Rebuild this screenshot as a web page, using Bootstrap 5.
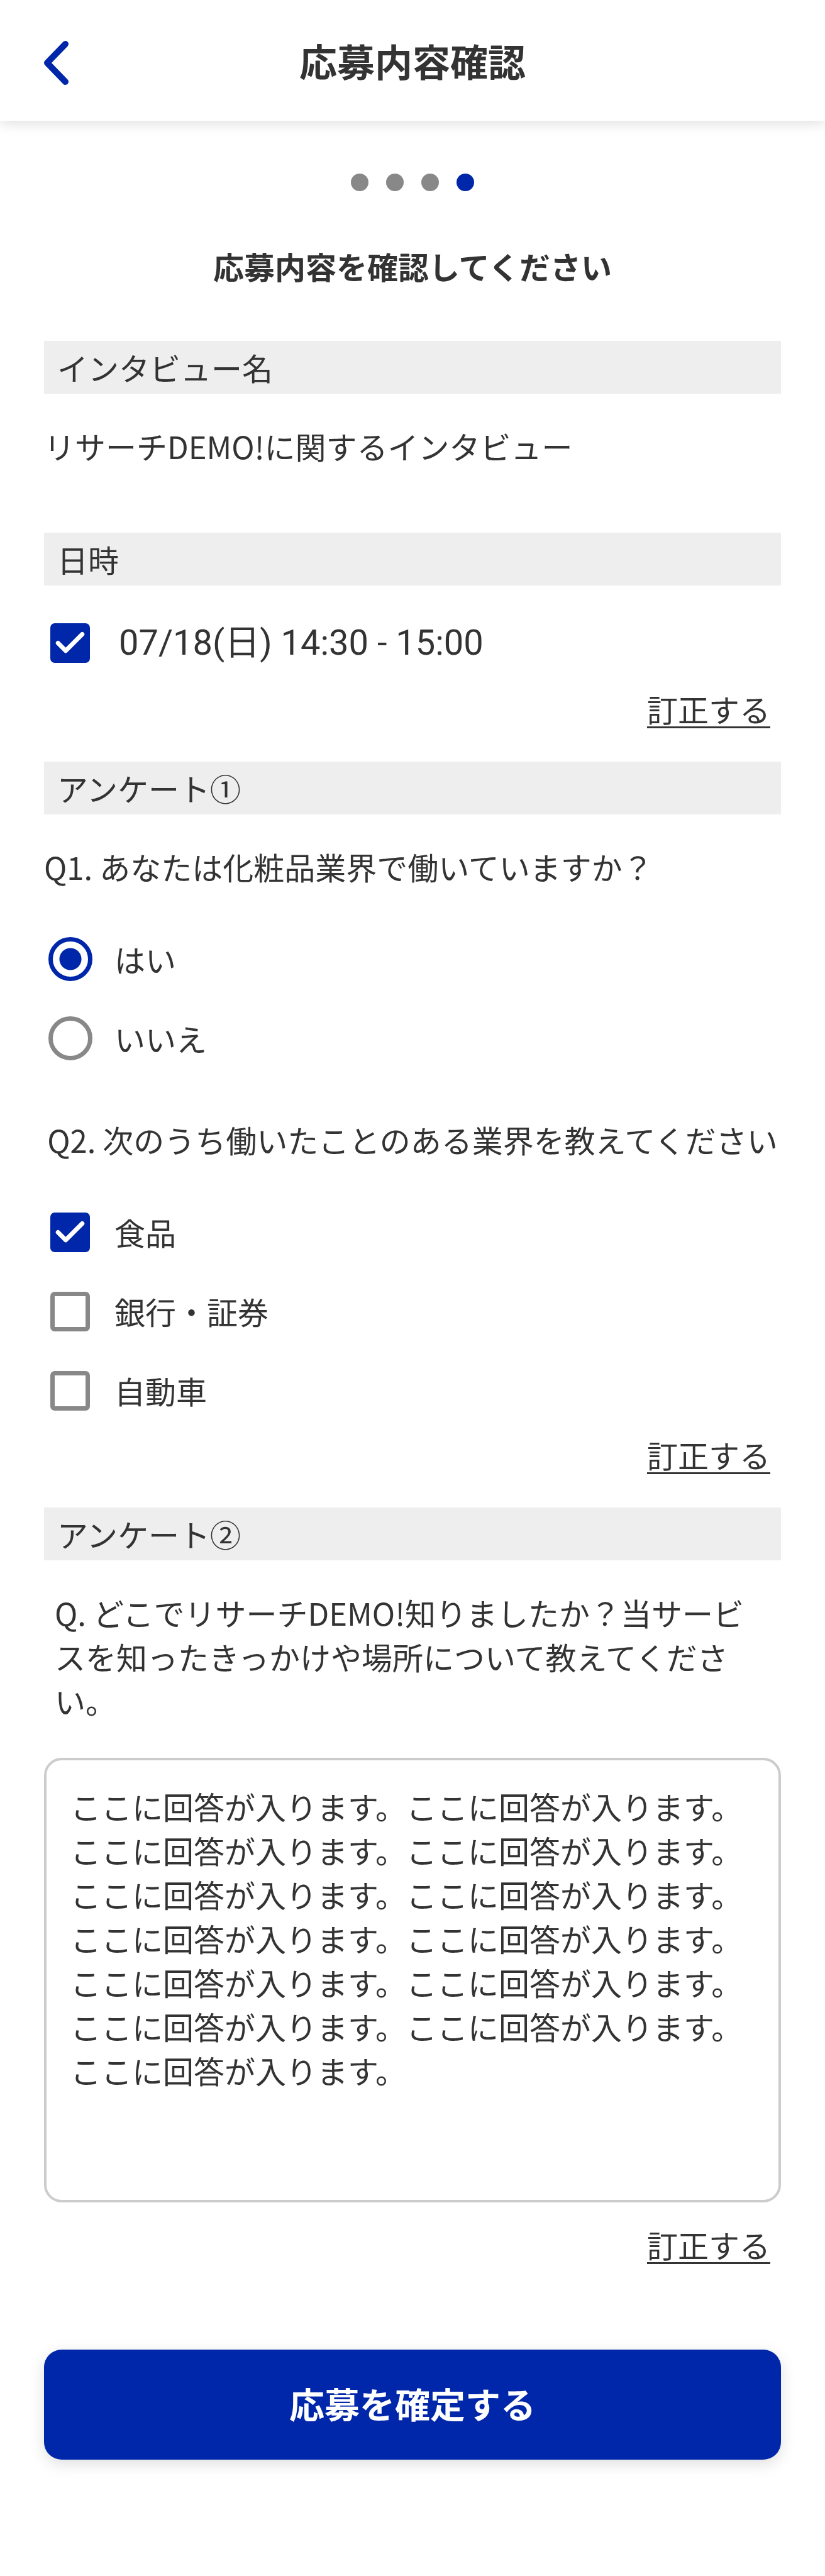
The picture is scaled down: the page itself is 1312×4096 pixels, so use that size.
<!DOCTYPE html>
<html lang="ja">
<head>
<meta charset="utf-8">
<meta name="viewport" content="width=device-width, initial-scale=1">
<title>応募内容確認</title>
<link href="https://cdn.jsdelivr.net/npm/bootstrap@5.3.0/dist/css/bootstrap.min.css" rel="stylesheet">
<style>
  :root { --brand: #0027a9; --ink: #333; --muted: #888; }
  body { font-family: "Noto Sans CJK JP", sans-serif; font-size: 49px; line-height: 70px; color: var(--ink); background: #fff; }
  h1, h2, p, label { margin: 0; }
  .app-header { height: 192px; padding: 0 70px; background: #fff; box-shadow: 0 4px 20px rgba(0,0,0,.13); display: grid; grid-template-columns: 1fr auto 1fr; align-items: center; }
  .app-header h1 { font-size: 60px; line-height: 84px; font-weight: 700; }
  .back-link { display: block; width: 40px; margin-top: 7px; }
  .back-link svg { display: block; }
  .page-main { padding: 84px 70px 184px; }
  .steps { gap: 28px; margin-bottom: 84px; }
  .step-dot { width: 28px; height: 28px; background: var(--muted); }
  .step-dot.active { background: var(--brand); }
  .page-lead { font-size: 49px; line-height: 70px; font-weight: 700; text-align: center; margin-bottom: 84px; }
  .section-bar { font-size: 49px; line-height: 84px; font-weight: 400; background: #eee; padding: 0 21px; margin-bottom: 48px; }
  .interview-name { margin-bottom: 103px; }
  .choices { display: flex; flex-direction: column; gap: 56px; }
  .choices-date { margin: 56px 0 35px; }
  .choices-radio { margin: 77px 0 91px; }
  .choices-check { margin: 77px 0 32px; }
  .choice { display: flex; align-items: center; height: 70px; }
  .choice .form-check-input { flex: none; float: none; margin: 0 35px 0 7px; width: 70px; height: 70px; border: 7px solid var(--muted); background-color: #fff; }
  .choice .form-check-input[type=checkbox] { margin: 0 39px 0 10px; width: 63px; height: 63px; border-radius: 7px; background-size: 63px 63px; background-position: center; background-origin: border-box; }
  .choice .form-check-input:checked { border-color: var(--brand); }
  .choice .form-check-input[type=radio]:checked { background-image: radial-gradient(circle, var(--brand) 17px, #fff 18px); }
  .choice .form-check-input[type=checkbox]:checked { background-color: var(--brand); background-image: url("data:image/svg+xml,%3csvg xmlns='http://www.w3.org/2000/svg' viewBox='0 0 72 72'%3e%3cpath fill='none' stroke='%23fff' stroke-width='8' stroke-linecap='round' stroke-linejoin='round' d='M14 36l14 14l30-30'/%3e%3c/svg%3e"); }
  .date-label { font-family: Roboto, "Noto Sans CJK JP", sans-serif; font-size: 56px; padding-left: 7px; }
  .edit-row { padding-right: 17px; margin-bottom: 49px; }
  .edit-row a { color: var(--ink); text-decoration: underline; text-decoration-thickness: 3px; text-underline-offset: 7px; text-decoration-skip-ink: none; }
  .free-question { padding: 0 17px; margin-bottom: 56px; }
  .answer-box { display: block; height: 707px; font-size: 49px; line-height: 70px; color: var(--ink); border: 4px solid #ccc; border-radius: 28px; padding: 38px; resize: none; margin-bottom: 32px; overflow: hidden; }
  .submit-btn { margin-top: 132px; height: 175px; padding: 0 0 6px; font-size: 56px; line-height: 84px; font-weight: 700; border: 0; border-radius: 28px; box-shadow: 0 7px 24px rgba(0,0,0,.13); --bs-btn-bg: var(--brand); --bs-btn-hover-bg: #001f87; }
</style>
<script src="https://cdn.jsdelivr.net/npm/bootstrap@5.3.0/dist/js/bootstrap.bundle.min.js"></script>
</head>
<body>
<header class="app-header">
  <a class="back-link" href="#" aria-label="戻る">
    <svg width="40" height="72" viewBox="0 0 40 72" fill="none" stroke="#0027a9" stroke-width="10" stroke-linecap="round" stroke-linejoin="round"><path d="M34 6L5 36l29 30"/></svg>
  </a>
  <h1>応募内容確認</h1>
</header>
<main class="page-main">
  <div class="steps d-flex justify-content-center">
    <span class="step-dot rounded-circle"></span>
    <span class="step-dot rounded-circle"></span>
    <span class="step-dot rounded-circle"></span>
    <span class="step-dot rounded-circle active"></span>
  </div>
  <p class="page-lead">応募内容を確認してください</p>

  <section>
    <h2 class="section-bar">インタビュー名</h2>
    <p class="interview-name">リサーチDEMO!に関するインタビュー</p>
  </section>

  <section>
    <h2 class="section-bar">日時</h2>
    <div class="choices choices-date">
      <div class="choice">
        <input class="form-check-input" type="checkbox" id="slot" checked>
        <label class="date-label" for="slot">07/18(日) 14:30 - 15:00</label>
      </div>
    </div>
    <div class="edit-row d-flex justify-content-end"><a href="#">訂正する</a></div>
  </section>

  <section>
    <h2 class="section-bar">アンケート①</h2>
    <p id="q1">Q1. あなたは化粧品業界で働いていますか？</p>
    <div class="choices choices-radio" role="radiogroup" aria-labelledby="q1">
      <div class="choice">
        <input class="form-check-input" type="radio" name="q1" id="q1-yes" checked>
        <label for="q1-yes">はい</label>
      </div>
      <div class="choice">
        <input class="form-check-input" type="radio" name="q1" id="q1-no">
        <label for="q1-no">いいえ</label>
      </div>
    </div>
    <p id="q2" class="text-center">Q2. 次のうち働いたことのある業界を教えてください</p>
    <div class="choices choices-check" role="group" aria-labelledby="q2">
      <div class="choice">
        <input class="form-check-input" type="checkbox" id="q2-food" checked>
        <label for="q2-food">食品</label>
      </div>
      <div class="choice">
        <input class="form-check-input" type="checkbox" id="q2-bank">
        <label for="q2-bank">銀行・証券</label>
      </div>
      <div class="choice">
        <input class="form-check-input" type="checkbox" id="q2-car">
        <label for="q2-car">自動車</label>
      </div>
    </div>
    <div class="edit-row d-flex justify-content-end"><a href="#">訂正する</a></div>
  </section>

  <section>
    <h2 class="section-bar">アンケート②</h2>
    <label class="free-question d-block" for="answer">Q. どこでリサーチDEMO!知りましたか？当サービスを知ったきっかけや場所について教えてください。</label>
    <textarea class="form-control answer-box" id="answer">ここに回答が入ります。ここに回答が入ります。ここに回答が入ります。ここに回答が入ります。ここに回答が入ります。ここに回答が入ります。ここに回答が入ります。ここに回答が入ります。ここに回答が入ります。ここに回答が入ります。ここに回答が入ります。ここに回答が入ります。ここに回答が入ります。</textarea>
    <div class="edit-row d-flex justify-content-end mb-0"><a href="#">訂正する</a></div>
  </section>

  <button type="button" class="submit-btn btn btn-primary w-100">応募を確定する</button>
</main>
</body>
</html>
